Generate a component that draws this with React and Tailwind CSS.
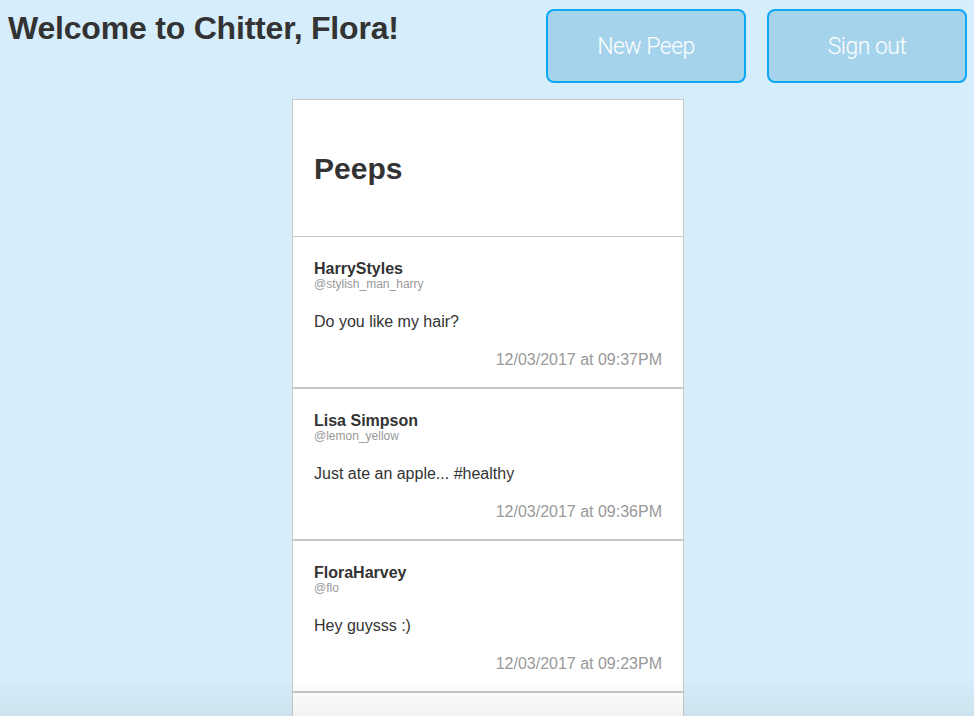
import React from 'react';

const peeps = [
  { name: 'HarryStyles', handle: '@stylish_man_harry', text: 'Do you like my hair?', time: '12/03/2017 at 09:37PM' },
  { name: 'Lisa Simpson', handle: '@lemon_yellow', text: 'Just ate an apple... #healthy', time: '12/03/2017 at 09:36PM' },
  { name: 'FloraHarvey', handle: '@flo', text: 'Hey guysss :)', time: '12/03/2017 at 09:23PM' },
];

function Peep({ peep }) {
  return (
    <div className="border-b-2 border-[#c8c8c8] px-[21px] pt-[23px] pb-[18px]">
      <div className="text-[16px] leading-[17px] font-bold text-[#333]">{peep.name}</div>
      <div className="text-[12px] leading-[14px] text-[#999]">{peep.handle}</div>
      <div className="mt-[22px] text-[16px] leading-[18px] text-[#333]">{peep.text}</div>
      <div className="mt-[20px] text-right text-[16px] leading-[18px] text-[#999]">{peep.time}</div>
    </div>
  );
}

export default function App() {
  return (
    <div
      className="min-h-screen bg-[#d6eefb] text-[#333]"
      style={{ fontFamily: '"Liberation Sans", Arial, sans-serif' }}
    >
      <header className="flex items-start justify-between pl-[8px] pr-[7px] pt-[9px]">
        <h1 className="mt-[1px] text-[32px] leading-[36px] font-bold tracking-[-0.2px] text-[#333]">
          Welcome to Chitter, Flora!
        </h1>
        <div className="flex gap-[21px]">
          {['New Peep', 'Sign out'].map((label) => (
            <button
              key={label}
              className="h-[74px] w-[200px] rounded-[8px] border-2 border-[#0aa8f5] bg-[#a6d3ec] pt-[2px] text-[23px] font-light tracking-[-0.5px] text-white"
              style={{ fontFamily: 'Roboto, "Liberation Sans", sans-serif' }}
            >
              {label}
            </button>
          ))}
        </div>
      </header>

      <main className="ml-[292px] mt-[16px] w-[392px] border border-b-0 border-[#c8c8c8] bg-white">
        <div className="flex h-[137px] items-center border-b border-[#c8c8c8] pl-[21px]">
          <h2 className="text-[30px] font-bold text-[#333]">Peeps</h2>
        </div>
        {peeps.map((p) => (
          <Peep key={p.name} peep={p} />
        ))}
        <div className="h-[40px]" />
      </main>

      <div className="pointer-events-none fixed bottom-0 left-0 right-0 h-[36px] bg-gradient-to-b from-transparent to-black/5" />
    </div>
  );
}
